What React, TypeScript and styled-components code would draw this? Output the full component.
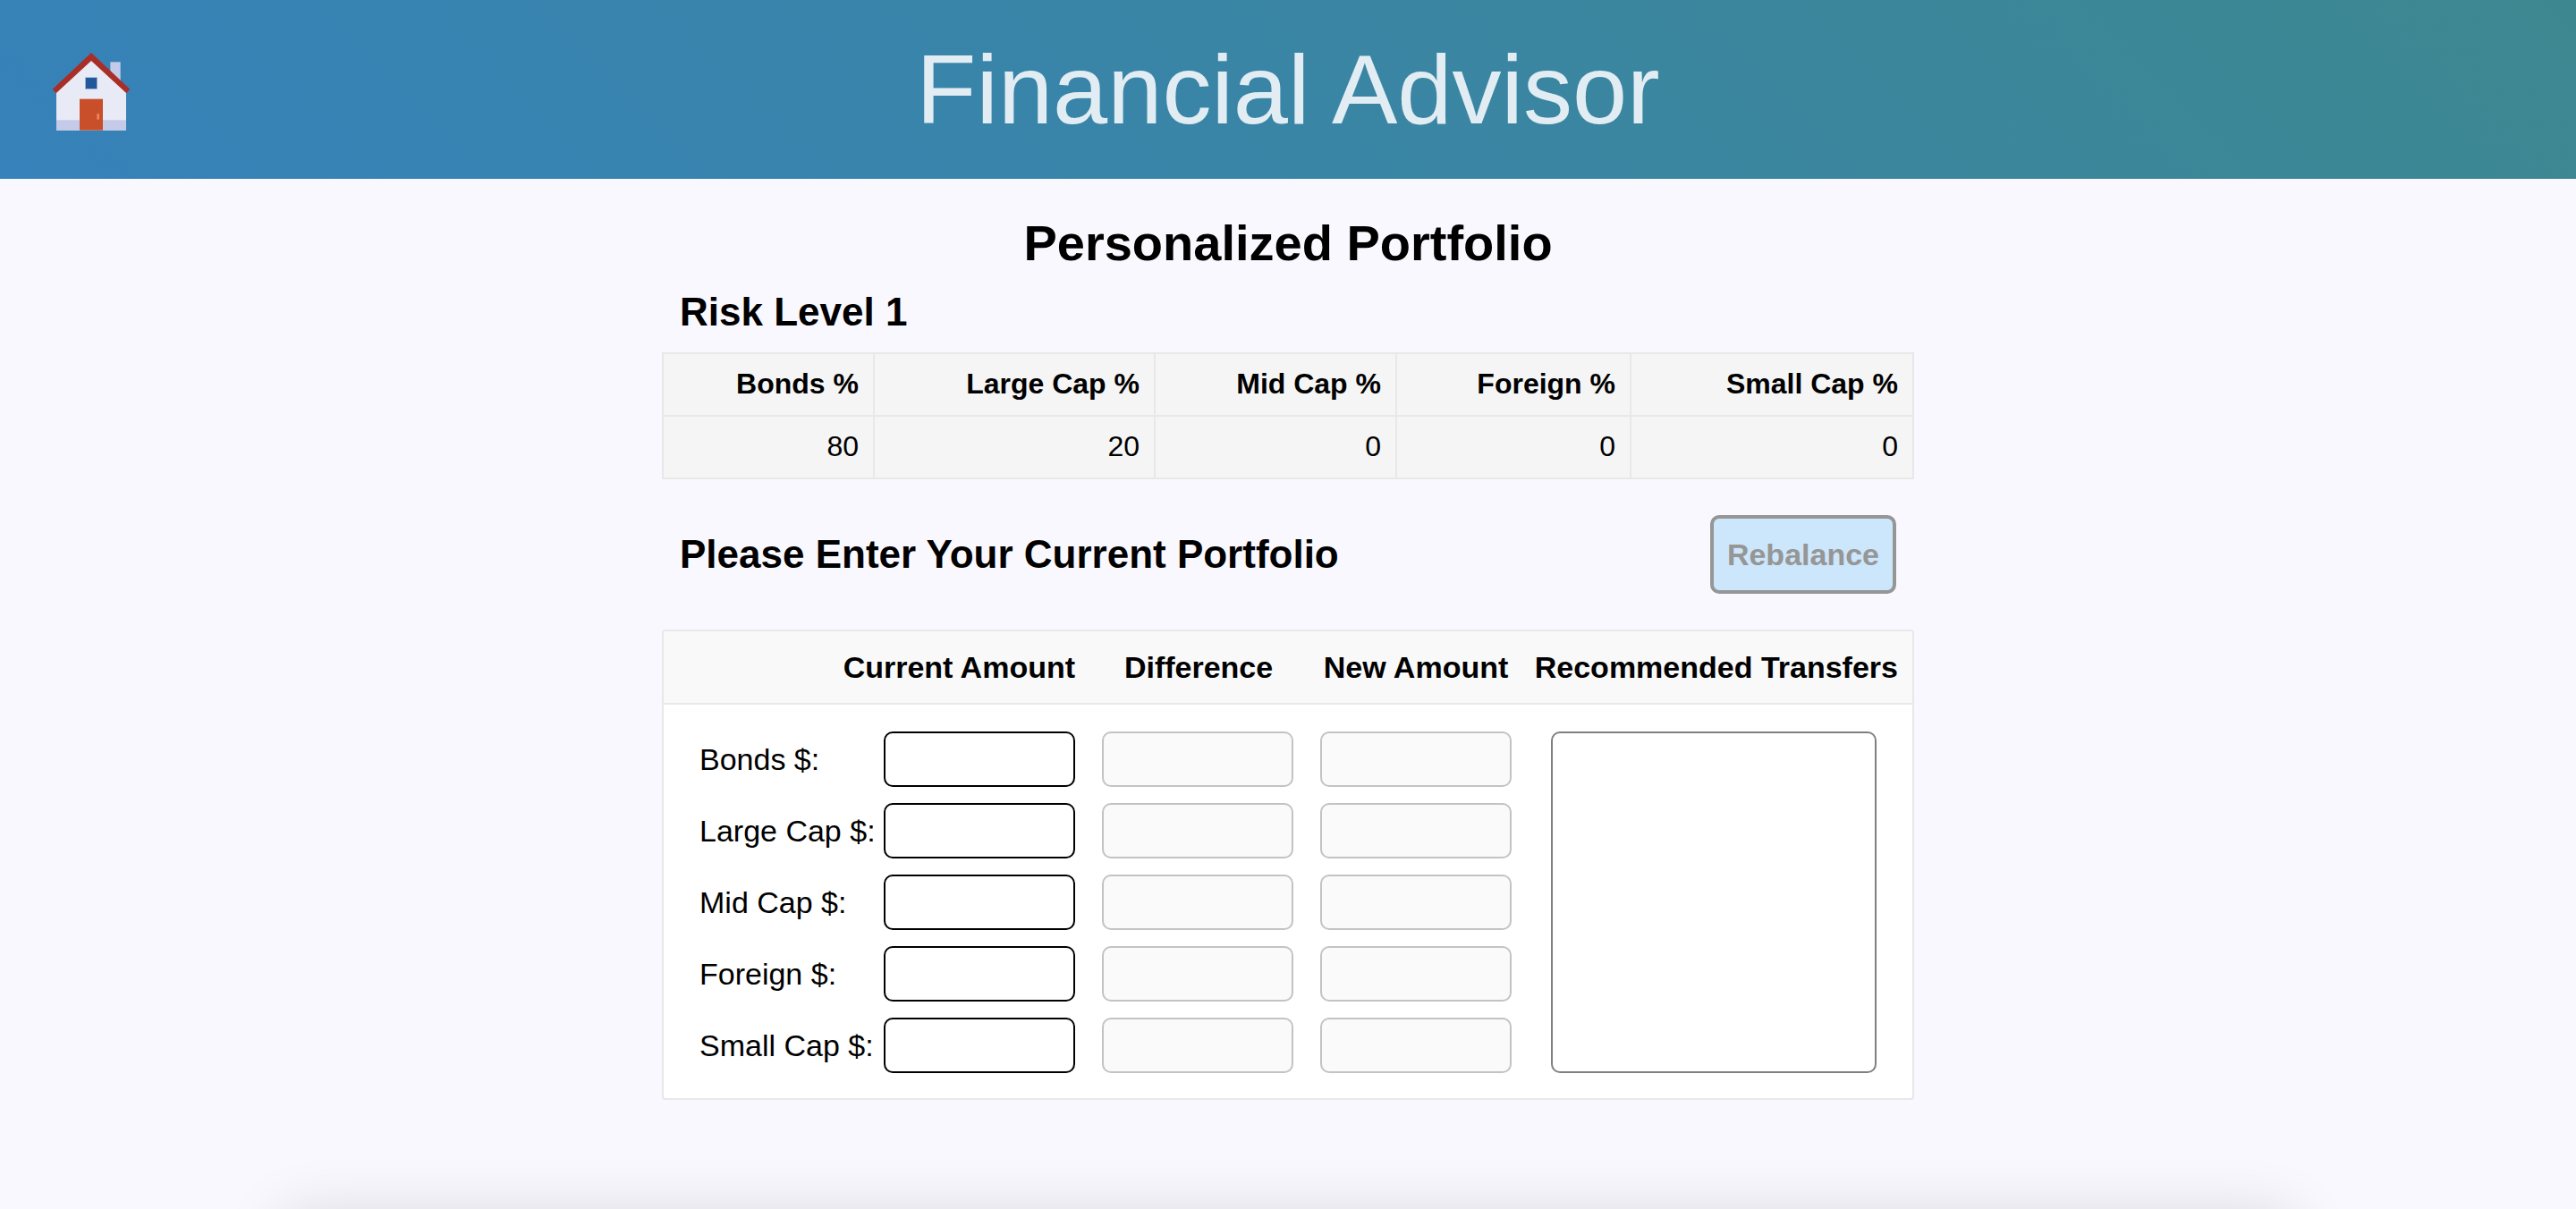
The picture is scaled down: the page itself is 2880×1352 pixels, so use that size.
import React from "react";
import styled, { createGlobalStyle } from "styled-components";

const GlobalStyle = createGlobalStyle`
  *, *::before, *::after { box-sizing: border-box; }
  body {
    margin: 0;
    background: #f9f8ff;
    color: #000;
    font-family: "Liberation Sans", Helvetica, Arial, sans-serif;
  }
`;

const Page = styled.div`
  position: relative;
  min-height: 100vh;
  overflow: hidden;

  /* soft shadow cast by the footer sheet tucked under the page */
  &::after {
    content: "";
    position: absolute;
    top: 100%;
    left: 11%;
    right: 11%;
    height: 200px;
    box-shadow: 0 8px 70px rgba(0, 0, 0, 0.14);
  }
`;

const Header = styled.header`
  display: grid;
  grid-template-columns: 1fr auto 1fr;
  align-items: center;
  min-height: 200px;
  padding: 0 52px;
  background: linear-gradient(45deg, #3682ba, #3d8890);
`;

const HomeLink = styled.a`
  display: block;
  justify-self: start;
  line-height: 0;
`;

const SiteTitle = styled.h1`
  margin: 0;
  color: #e1edf2;
  font-size: 110px;
  font-weight: 400;
  line-height: 128px;
`;

const Main = styled.main`
  width: 100%;
  max-width: 1400px;
  margin: 0 auto;
  padding: 40px 0;
`;

const PageTitle = styled.h2`
  margin: 0;
  text-align: center;
  font-size: 56px;
  line-height: 64px;
`;

const SectionBar = styled.div<{ $gap: number }>`
  display: flex;
  align-items: center;
  justify-content: space-between;
  margin: ${(p) => p.$gap}px 0;
  padding: 0 20px;
`;

const SectionTitle = styled.h3`
  margin: 0;
  font-size: 44px;
  line-height: 50px;
`;

const RebalanceButton = styled.button`
  height: 88px;
  padding: 0 15px;
  border: 4px solid #969696;
  border-radius: 10px;
  background: #cce6fb;
  color: #969696;
  font-family: inherit;
  font-size: 34px;
  font-weight: 700;
`;

const Col = styled.col<{ $width?: number }>`
  width: ${(p) => (p.$width ? `${p.$width}px` : "auto")};
`;

const RiskTable = styled.table`
  width: 100%;
  table-layout: fixed;
  border-collapse: collapse;
  background: #f5f5f5;
  font-size: 32px;
  line-height: 36px;

  th,
  td {
    padding: 15px 16px 17px;
    border: 2px solid #e8e8e8;
    text-align: right;
  }
`;

const EntryTable = styled.table`
  width: 100%;
  table-layout: fixed;
  border: 2px solid #e8e8e8;
  border-radius: 4px;
  border-spacing: 0;
  background: #fff;
`;

const HeadCell = styled.th<{ $align?: string }>`
  height: 82px;
  padding: 0 ${(p) => (p.$align === "right" ? 16 : 0)}px 0 0;
  border-bottom: 2px solid #e8e8e8;
  background: #f9f9f9;
  font-size: 34px;
  line-height: 40px;
  text-align: ${(p) => p.$align ?? "center"};
  white-space: nowrap;
`;

const EntryRow = styled.tr`
  & > * {
    padding-top: 9px;
    padding-bottom: 9px;
  }
  &:first-child > * {
    padding-top: 30px;
  }
  &:last-child > * {
    padding-bottom: 28px;
  }
`;

const LabelCell = styled.th`
  padding-left: 40px;
  font-size: 34px;
  font-weight: 400;
  line-height: 40px;
  text-align: left;
  white-space: nowrap;
`;

const FieldCell = styled.td<{ $left: number; $right: number }>`
  padding-left: ${(p) => p.$left}px;
  padding-right: ${(p) => p.$right}px;
`;

const AmountInput = styled.input`
  display: block;
  width: 100%;
  height: 62px;
  padding: 0 12px;
  border: 2px solid #000;
  border-radius: 10px;
  background: #fff;
  font-family: inherit;
  font-size: 32px;

  &:disabled {
    border-color: #c3c3c3;
    background: #fafafa;
  }
`;

const TransfersCell = styled.td`
  && {
    padding: 30px 40px 28px 30px;
  }
`;

const Transfers = styled.textarea`
  display: block;
  width: 100%;
  height: 382px;
  padding: 12px;
  border: 2px solid #808080;
  border-radius: 10px;
  background: #fff;
  font-family: inherit;
  font-size: 32px;
  resize: none;
`;

const HouseIcon = () => (
  <svg width="96" height="96" viewBox="36 36 288 288" aria-hidden="true">
    <rect x="250" y="88" width="34" height="75" fill="#c5cae9" />
    <path d="M69 186 186 78 303 186V317H69Z" fill="#e8eaf6" />
    <rect x="69" y="283" width="234" height="34" fill="#c5cae9" />
    <rect x="147" y="212" width="78" height="105" fill="#c94f2a" />
    <rect x="166" y="140" width="40" height="39" fill="#21579b" stroke="#b7c4de" strokeWidth="2" />
    <rect x="205" y="261" width="8" height="20" rx="3" fill="#ee8560" />
    <path d="M186 57 316 179 304 193 186 84 68 193 56 179Z" fill="#a92e27" />
  </svg>
);

const allocations = [
  { name: "Bonds", percent: 80, width: 236 },
  { name: "Large Cap", percent: 20, width: 314 },
  { name: "Mid Cap", percent: 0, width: 270 },
  { name: "Foreign", percent: 0, width: 262 },
  { name: "Small Cap", percent: 0, width: 316 },
];

export default function App() {
  return (
    <>
      <GlobalStyle />
      <Page>
        <Header>
          <HomeLink href="#" aria-label="Home">
            <HouseIcon />
          </HomeLink>
          <SiteTitle>Financial Advisor</SiteTitle>
        </Header>
        <Main>
          <PageTitle>Personalized Portfolio</PageTitle>
          <SectionBar $gap={20}>
            <SectionTitle>Risk Level 1</SectionTitle>
          </SectionBar>
          <RiskTable>
            <colgroup>
              {allocations.map((a) => (
                <Col key={a.name} $width={a.width} />
              ))}
            </colgroup>
            <thead>
              <tr>
                {allocations.map((a) => (
                  <th key={a.name} scope="col">{`${a.name} %`}</th>
                ))}
              </tr>
            </thead>
            <tbody>
              <tr>
                {allocations.map((a) => (
                  <td key={a.name}>{a.percent}</td>
                ))}
              </tr>
            </tbody>
          </RiskTable>
          <SectionBar $gap={40}>
            <SectionTitle>Please Enter Your Current Portfolio</SectionTitle>
            <RebalanceButton type="button" disabled>
              Rebalance
            </RebalanceButton>
          </SectionBar>
          <EntryTable>
            <colgroup>
              <Col $width={246} />
              <Col $width={230} />
              <Col $width={244} />
              <Col $width={242} />
              <Col />
            </colgroup>
            <thead>
              <tr>
                <HeadCell scope="col" colSpan={2} $align="right">
                  Current Amount
                </HeadCell>
                <HeadCell scope="col">Difference</HeadCell>
                <HeadCell scope="col">New Amount</HeadCell>
                <HeadCell scope="col" id="transfers-label" $align="right">
                  Recommended Transfers
                </HeadCell>
              </tr>
            </thead>
            <tbody>
              {allocations.map((a, i) => {
                const id = `amount-${i}`;
                return (
                  <EntryRow key={a.name}>
                    <LabelCell scope="row">
                      <label htmlFor={id}>{`${a.name} $:`}</label>
                    </LabelCell>
                    <FieldCell $left={0} $right={16}>
                      <AmountInput id={id} type="text" inputMode="decimal" />
                    </FieldCell>
                    <FieldCell $left={14} $right={16}>
                      <AmountInput type="text" disabled aria-label={`${a.name} difference`} />
                    </FieldCell>
                    <FieldCell $left={14} $right={14}>
                      <AmountInput type="text" disabled aria-label={`${a.name} new amount`} />
                    </FieldCell>
                    {i === 0 && (
                      <TransfersCell rowSpan={allocations.length}>
                        <Transfers readOnly aria-labelledby="transfers-label" />
                      </TransfersCell>
                    )}
                  </EntryRow>
                );
              })}
            </tbody>
          </EntryTable>
        </Main>
      </Page>
    </>
  );
}
